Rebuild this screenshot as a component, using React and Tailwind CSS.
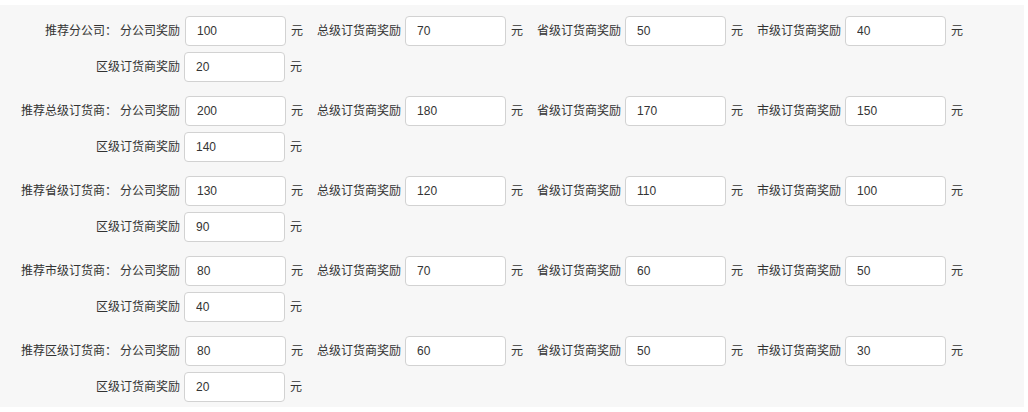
import React from 'react';

const levels = ['分公司奖励', '总级订货商奖励', '省级订货商奖励', '市级订货商奖励', '区级订货商奖励'];

const groups = [
  { title: '推荐分公司：', values: [100, 70, 50, 40, 20] },
  { title: '推荐总级订货商：', values: [200, 180, 170, 150, 140] },
  { title: '推荐省级订货商：', values: [130, 120, 110, 100, 90] },
  { title: '推荐市级订货商：', values: [80, 70, 60, 50, 40] },
  { title: '推荐区级订货商：', values: [80, 60, 50, 30, 20] },
];

function AmountInput({ value, first }) {
  return (
    <>
      <input
        type="text"
        defaultValue={value}
        className={
          (first ? 'ml-[5px] ' : 'ml-[4px] ') +
          'h-[30px] w-[101px] rounded-[4px] border border-[#d2d2d2] bg-white px-[11px] text-[12px] text-[#333] outline-none'
        }
      />
      <span className="ml-[5px] mr-[14px]">元</span>
    </>
  );
}

function RewardGroup({ group }) {
  return (
    <div className="flex flex-col gap-[6px]">
      {/* first line: four levels */}
      <div className="flex h-[30px] items-center">
        <div className="w-[180px] whitespace-nowrap text-right">
          {group.title}
          <span className="ml-[3px]">{levels[0]}</span>
        </div>
        <AmountInput value={group.values[0]} first />
        {levels.slice(1, 4).map((name, i) => (
          <React.Fragment key={name}>
            <span className="whitespace-nowrap">{name}</span>
            <AmountInput value={group.values[i + 1]} />
          </React.Fragment>
        ))}
      </div>
      {/* second line: district level */}
      <div className="flex h-[30px] items-center">
        <div className="w-[180px] text-right">{levels[4]}</div>
        <AmountInput value={group.values[4]} />
      </div>
    </div>
  );
}

export default function App() {
  return (
    <div className="h-[412px] w-[1028px] bg-white pt-[5px] text-[12px] text-[#333] [font-family:'Liberation_Sans','Noto_Sans_CJK_SC',sans-serif]">
      <div className="mr-[4px] flex flex-col gap-[14px] bg-[#f7f7f7] pb-[5px] pt-[11px]">
        {groups.map((g) => (
          <RewardGroup key={g.title} group={g} />
        ))}
      </div>
    </div>
  );
}
